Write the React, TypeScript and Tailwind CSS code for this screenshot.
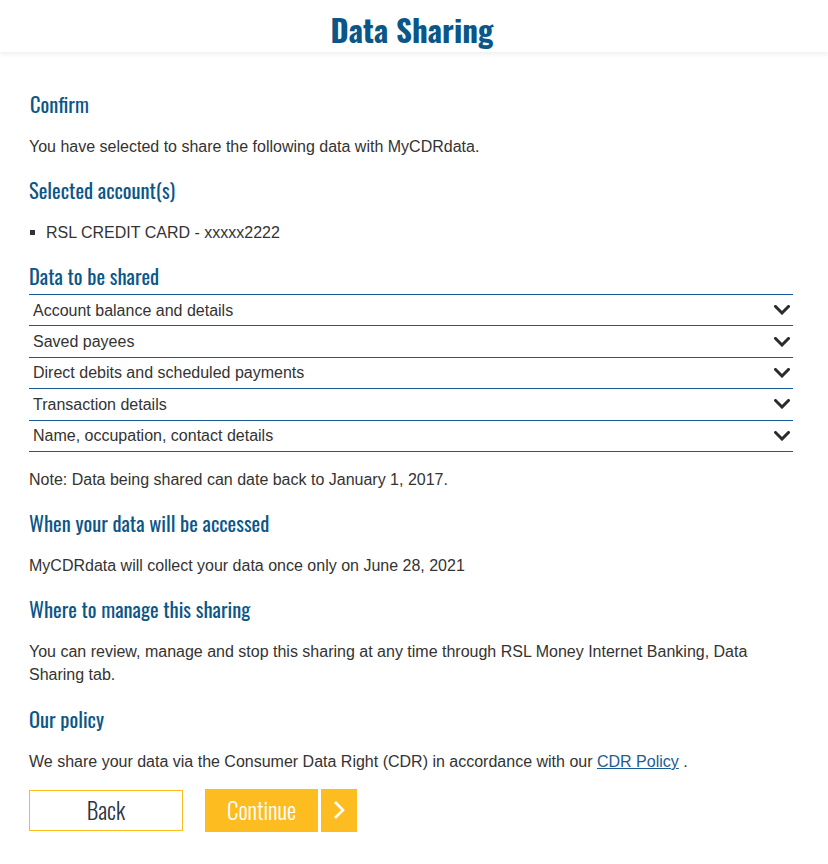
import React from "react";

const headFont = "font-['Oswald','Liberation_Sans_Narrow','DejaVu_Sans_Condensed',sans-serif]";

const dataItems = [
  "Account balance and details",
  "Saved payees",
  "Direct debits and scheduled payments",
  "Transaction details",
  "Name, occupation, contact details",
];

function Chevron() {
  return (
    <svg width="16" height="10" viewBox="0 0 16 10" fill="none">
      <path d="M1.5 1.5 L8 8 L14.5 1.5" stroke="#2b2b2b" strokeWidth="3" strokeLinecap="square" />
    </svg>
  );
}

function Heading({ children, className = "" }: { children: React.ReactNode; className?: string }) {
  return (
    <h2 className={`${headFont} font-normal text-[20.5px] leading-[32px] text-[#0b5688] ${className}`}>
      {children}
    </h2>
  );
}

export default function App() {
  return (
    <div className="min-h-screen bg-white font-['Liberation_Sans',Arial,sans-serif] text-[16px] leading-[23px] text-[#333]">
      <header className="h-[52px] flex items-center justify-center bg-white shadow-[0_2px_5px_rgba(0,0,0,0.07)]">
        <h1 className={`${headFont} font-bold text-[31px] leading-none text-[#0b5688] mt-[6px] mr-[4px]`}>
          Data Sharing
        </h1>
      </header>

      <main className="pl-[29px] pr-[35px]">
        <Heading className="mt-[36px] pl-px">Confirm</Heading>
        <p className="mt-[15px]">You have selected to share the following data with MyCDRdata.</p>

        <Heading className="mt-[16px]">Selected account(s)</Heading>
        <ul className="mt-[15px]">
          <li className="flex items-center">
            <span className="w-[5px] h-[5px] bg-[#333] ml-[1px] mr-[11px]" />
            <span>RSL CREDIT CARD - xxxxx2222</span>
          </li>
        </ul>

        <Heading className="mt-[16px] mb-[2px]">Data to be shared</Heading>
        <div className="border-t border-[#1a5a9a]">
          {dataItems.map((item) => (
            <div
              key={item}
              className="h-[31.4px] flex items-center justify-between border-b border-[#1a5a9a] pl-[4px] pr-[3px]"
            >
              <span>{item}</span>
              <Chevron />
            </div>
          ))}
        </div>

        <p className="mt-[16px]">Note: Data being shared can date back to January 1, 2017.</p>

        <Heading className="mt-[16px]">When your data will be accessed</Heading>
        <p className="mt-[15px]">MyCDRdata will collect your data once only on June 28, 2021</p>

        <Heading className="mt-[16px]">Where to manage this sharing</Heading>
        <p className="mt-[15px] pr-[20px]">
          You can review, manage and stop this sharing at any time through RSL Money Internet Banking, Data
          Sharing tab.
        </p>

        <Heading className="mt-[17px]">Our policy</Heading>
        <p className="mt-[15px]">
          We share your data via the Consumer Data Right (CDR) in accordance with our{" "}
          <a href="#" className="text-[#1c5d93] underline">
            CDR Policy
          </a>{" "}
          .
        </p>

        <div className="mt-[16px] flex items-center">
          <button
            className={`${headFont} font-light w-[154px] h-[41px] border border-[#fbbc1f] text-[23px] text-[#2e3540] flex items-center justify-center`}
          >
            Back
          </button>
          <div className="ml-[22px] flex gap-[3px]">
            <button
              className={`${headFont} font-light w-[113px] h-[43px] bg-[#fdbd21] text-white text-[23px] flex items-center justify-center`}
            >
              Continue
            </button>
            <button className="w-[36px] h-[43px] bg-[#fdbd21] flex items-center justify-center" aria-label="Continue">
              <svg width="12" height="20" viewBox="0 0 12 20" fill="none">
                <path d="M2 2 L10 10 L2 18" stroke="white" strokeWidth="2.6" />
              </svg>
            </button>
          </div>
        </div>
      </main>
    </div>
  );
}
